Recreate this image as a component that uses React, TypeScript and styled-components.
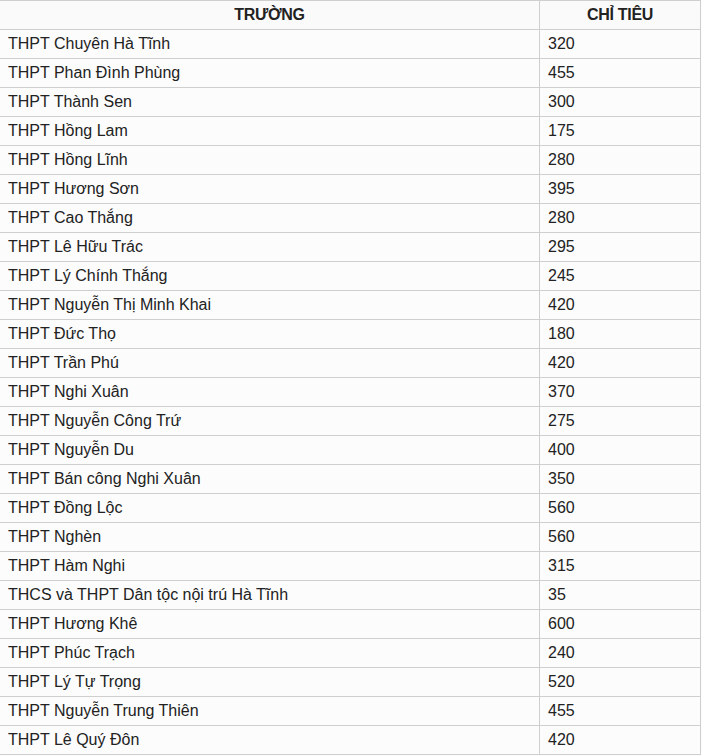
import React from "react";
import styled, { createGlobalStyle } from "styled-components";

const GlobalStyle = createGlobalStyle`
  html, body {
    margin: 0;
    padding: 0;
    background: #fcfcfc;
  }
  body {
    font-family: "Liberation Sans", Arial, sans-serif;
  }
`;

const Table = styled.table`
  width: 701px;
  border-collapse: collapse;
  border-bottom: 1px solid #cfcfcf;
  box-shadow: 0 2px 0 #444;
  font-size: 16px;
  color: #222;
`;

const HeadCell = styled.th`
  height: 28px;
  padding: 0 8px;
  border-top: 1px solid #cfcfcf;
  border-bottom: 1px solid #cfcfcf;
  border-right: 1px solid #cfcfcf;
  background: #fafafa;
  font-size: 16px;
  font-weight: 700;
  letter-spacing: -0.3px;
  text-align: center;
  text-transform: uppercase;
`;

const Cell = styled.td<{ $narrow?: boolean }>`
  height: 28px;
  padding: 0 8px;
  border-bottom: 1px solid #cfcfcf;
  border-right: 1px solid #cfcfcf;
  width: ${(p) => (p.$narrow ? "144px" : "auto")};
  background: #fcfcfc;
  line-height: 28px;
`;

const rows: [string, number][] = [
  ["THPT Chuyên Hà Tĩnh", 320],
  ["THPT Phan Đình Phùng", 455],
  ["THPT Thành Sen", 300],
  ["THPT Hồng Lam", 175],
  ["THPT Hồng Lĩnh", 280],
  ["THPT Hương Sơn", 395],
  ["THPT Cao Thắng", 280],
  ["THPT Lê Hữu Trác", 295],
  ["THPT Lý Chính Thắng", 245],
  ["THPT Nguyễn Thị Minh Khai", 420],
  ["THPT Đức Thọ", 180],
  ["THPT Trần Phú", 420],
  ["THPT Nghi Xuân", 370],
  ["THPT Nguyễn Công Trứ", 275],
  ["THPT Nguyễn Du", 400],
  ["THPT Bán công Nghi Xuân", 350],
  ["THPT Đồng Lộc", 560],
  ["THPT Nghèn", 560],
  ["THPT Hàm Nghi", 315],
  ["THCS và THPT Dân tộc nội trú Hà Tĩnh", 35],
  ["THPT Hương Khê", 600],
  ["THPT Phúc Trạch", 240],
  ["THPT Lý Tự Trọng", 520],
  ["THPT Nguyễn Trung Thiên", 455],
  ["THPT Lê Quý Đôn", 420],
];

export default function App() {
  return (
    <>
      <GlobalStyle />
      <Table>
        <thead>
          <tr>
            <HeadCell>Trường</HeadCell>
            <HeadCell>Chỉ tiêu</HeadCell>
          </tr>
        </thead>
        <tbody>
          {rows.map(([name, quota]) => (
            <tr key={name}>
              <Cell>{name}</Cell>
              <Cell $narrow>{quota}</Cell>
            </tr>
          ))}
        </tbody>
      </Table>
    </>
  );
}
